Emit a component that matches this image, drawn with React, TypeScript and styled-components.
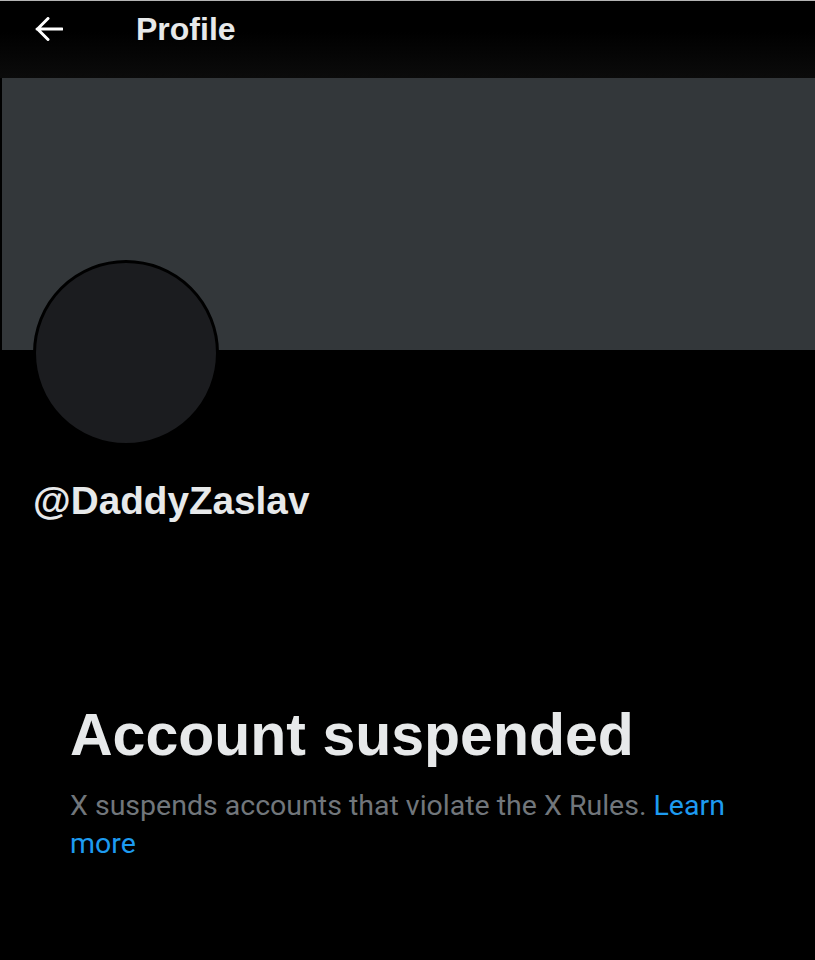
import React from "react";
import styled, { createGlobalStyle } from "styled-components";

const Global = createGlobalStyle`
  html, body {
    margin: 0;
    padding: 0;
    background: #000;
  }
  body {
    font-family: "Roboto", "Liberation Sans", Arial, sans-serif;
    color: #e7e9ea;
  }
`;

const Page = styled.div`
  width: 815px;
  min-height: 960px;
  background: #000;
  border-top: 1px solid #b4b4b4;
  box-sizing: border-box;
  display: flex;
  flex-direction: column;
`;

const Header = styled.header`
  height: 77px;
  display: flex;
  align-items: flex-start;
  padding-top: 9px;
  box-sizing: border-box;
  background: linear-gradient(to bottom, #000 0%, #000 40%, #0b0b0b 100%);
`;

const BackButton = styled.button`
  width: 100px;
  height: 38px;
  padding: 0 0 0 35px;
  border: 0;
  background: transparent;
  display: flex;
  align-items: center;
  color: #fff;
  cursor: pointer;
`;

const Title = styled.h1`
  margin: 0;
  padding-left: 36px;
  font-family: "Liberation Sans", Arial, sans-serif;
  font-weight: 700;
  font-size: 32px;
  line-height: 38px;
  color: #e7e9ea;
`;

const Banner = styled.div`
  height: 272px;
  margin-left: 2px;
  background: #33373a;
`;

const ProfileBlock = styled.div`
  padding-left: 33px;
  display: flex;
  flex-direction: column;
`;

const Avatar = styled.div`
  width: 186px;
  height: 186px;
  margin-top: -90px;
  border-radius: 50%;
  border: 3px solid #000;
  box-sizing: border-box;
  background: #1b1c1f;
`;

const Handle = styled.div`
  margin-top: 33px;
  font-family: "Liberation Sans", Arial, sans-serif;
  font-weight: 700;
  font-size: 38.7px;
  line-height: 44px;
  color: #e7e9ea;
`;

const Notice = styled.section`
  margin-top: 180px;
  padding: 0 70px;
`;

const Heading = styled.h2`
  margin: 0;
  font-family: "Liberation Sans", Arial, sans-serif;
  font-weight: 700;
  font-size: 59px;
  line-height: 64px;
  color: #e7e9ea;
`;

const Body = styled.p`
  margin: 20px 0 0;
  font-family: "Roboto", "Liberation Sans", Arial, sans-serif;
  font-size: 28.5px;
  line-height: 38px;
  color: #71767b;
`;

const Link = styled.a`
  color: #1d9bf0;
  text-decoration: none;
`;

export default function App() {
  return (
    <>
      <Global />
      <Page>
        <Header>
          <BackButton aria-label="Back">
            <svg width="28" height="24" viewBox="0 0 28 24" fill="none">
              <path
                d="M2 12H27M13 1.5L2.5 12L13 22.5"
                stroke="#fff"
                strokeWidth="3"
                strokeLinecap="round"
                strokeLinejoin="round"
              />
            </svg>
          </BackButton>
          <Title>Profile</Title>
        </Header>
        <Banner />
        <ProfileBlock>
          <Avatar />
          <Handle>@DaddyZaslav</Handle>
        </ProfileBlock>
        <Notice>
          <Heading>Account suspended</Heading>
          <Body>
            X suspends accounts that violate the X Rules. <Link href="#">Learn more</Link>
          </Body>
        </Notice>
      </Page>
    </>
  );
}
